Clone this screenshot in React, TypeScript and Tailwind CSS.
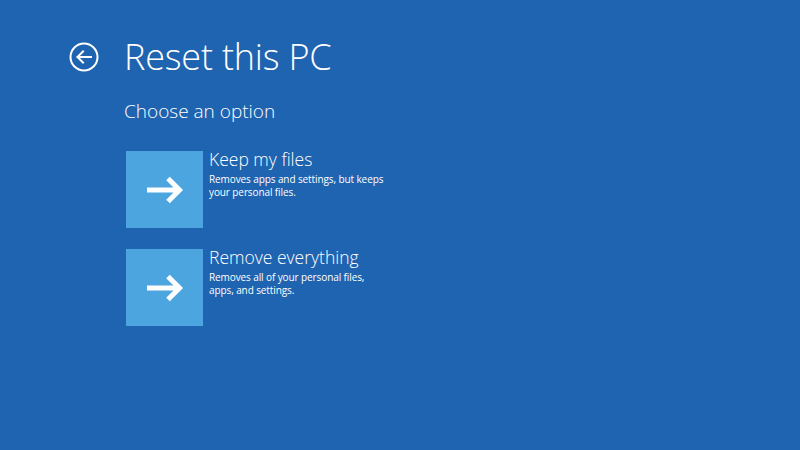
const options = [
  {
    title: "Keep my files",
    lines: ["Removes apps and settings, but keeps", "your personal files."],
  },
  {
    title: "Remove everything",
    lines: ["Removes all of your personal files,", "apps, and settings."],
  },
];

function BackButton() {
  return (
    <svg width="30" height="30" viewBox="0 0 30 30" fill="none" stroke="white" strokeWidth="2">
      <circle cx="15" cy="15" r="13.5" />
      <path d="M22 15H8.5M14 9.5L8.5 15l5.5 5.5" strokeLinecap="square" />
    </svg>
  );
}

function Arrow() {
  return (
    <svg width="38" height="28" viewBox="0 0 38 28" fill="none" stroke="white" strokeWidth="5">
      <path d="M1 14h32M22 2.5L33.5 14 22 25.5" />
    </svg>
  );
}

export default function App() {
  return (
    <div
      className="w-[800px] h-[450px] bg-[#1f64b0] text-white overflow-hidden"
      style={{ fontFamily: '"Open Sans", "Noto Sans", sans-serif' }}
    >
      <div className="flex items-center pt-[34px] pl-[69px]">
        <BackButton />
        <h1 className="ml-[25px] text-[36px] font-light leading-[46px] tracking-[-0.2px]">Reset this PC</h1>
      </div>
      <div className="pl-[124px] pt-[19px]">
        <h2 className="text-[19px] font-light leading-[24px]">Choose an option</h2>
        <div className="mt-[28px] flex flex-col gap-[21px] pl-[2px]">
          {options.map(o => (
            <div key={o.title} className="flex">
              <div className="w-[77px] h-[77px] bg-[#4ca5df] flex items-center justify-center">
                <Arrow />
              </div>
              <div className="ml-[6px] -mt-[3px]">
                <div className="text-[17.5px] font-light leading-[22px]">{o.title}</div>
                <div className="mt-[3px] text-[10px] leading-[12.5px] tracking-[-0.1px]">
                  {o.lines.map(l => (
                    <div key={l}>{l}</div>
                  ))}
                </div>
              </div>
            </div>
          ))}
        </div>
      </div>
    </div>
  );
}
